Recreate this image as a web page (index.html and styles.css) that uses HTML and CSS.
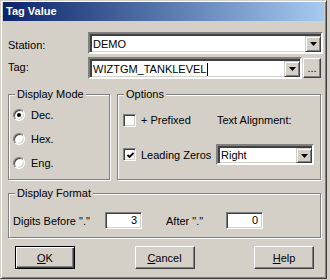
FILE: index.html
```html
<!DOCTYPE html>
<html>
<head>
<meta charset="utf-8">
<link rel="stylesheet" href="styles.css">
</head>
<body>
<div class="window">
  <div class="titlebar">Tag Value</div>
  <div class="body">
    <div class="row">
      <span class="lbl lbl-station">Station:</span>
      <div class="combo combo-station">
        <span class="val">DEMO</span>
        <span class="ddbtn"><svg width="7" height="4" viewBox="0 0 7 4"><polygon points="0,0 7,0 3.5,4" fill="#000"/></svg></span>
      </div>
    </div>
    <div class="row">
      <span class="lbl lbl-tag">Tag:</span>
      <div class="combo combo-tag">
        <span class="val">WIZTGM_TANKLEVEL<span class="caret"></span></span>
        <span class="ddbtn"><svg width="7" height="4" viewBox="0 0 7 4"><polygon points="0,0 7,0 3.5,4" fill="#000"/></svg></span>
      </div>
      <span class="btn btn-dots">...</span>
    </div>

    <div class="groups">
      <div class="group group-mode">
        <div class="legend">Display Mode</div>
        <div class="radios">
          <div class="ropt"><span class="radio on"></span><span>Dec.</span></div>
          <div class="ropt"><span class="radio"></span><span>Hex.</span></div>
          <div class="ropt"><span class="radio"></span><span>Eng.</span></div>
        </div>
      </div>
      <div class="group group-options">
        <div class="legend">Options</div>
        <div class="optgrid">
          <div class="copt"><span class="check"></span><span>+ Prefixed</span></div>
          <div class="talign">Text Alignment:</div>
          <div class="copt"><span class="check"><svg width="9" height="9" viewBox="0 0 9 9"><path d="M1.5 4 L3.5 6 L7.5 2" fill="none" stroke="#000" stroke-width="1.8"/></svg></span><span>Leading Zeros</span></div>
          <div class="combo combo-align">
            <span class="val">Right</span>
            <span class="ddbtn"><svg width="7" height="4" viewBox="0 0 7 4"><polygon points="0,0 7,0 3.5,4" fill="#000"/></svg></span>
          </div>
        </div>
      </div>
    </div>

    <div class="group group-format">
      <div class="legend">Display Format</div>
      <div class="fmtrow">
        <span class="flbl1">Digits Before "."</span>
        <span class="num">3</span>
        <span class="flbl2">After "."</span>
        <span class="num">0</span>
      </div>
    </div>

    <div class="buttons">
      <span class="btn btn-main default"><u>O</u>K</span>
      <span class="btn btn-main"><u>C</u>ancel</span>
      <span class="btn btn-main"><u>H</u>elp</span>
    </div>
  </div>
</div>
</body>
</html>
```

FILE: styles.css
```css
* { box-sizing: border-box; }
html, body { margin: 0; padding: 0; }
body {
  background: #d4d0c8;
  font: 11px "Liberation Sans", Arial, sans-serif;
  color: #000;
  width: 330px;
  height: 280px;
  overflow: hidden;
}
.window {
  width: 327px;
  height: 279px;
  border: 1px solid;
  border-color: #d4d0c8 #404040 #404040 #d4d0c8;
  box-shadow: inset 1px 1px #fff, inset -1px -1px #808080;
  padding: 1px 2px 2px 2px;
}
.titlebar {
  height: 19px;
  line-height: 19px;
  padding-left: 3px;
  background: linear-gradient(to right, #0a246a, #a6caf0);
  color: #fff;
  font-weight: bold;
}
.body {
  padding: 11px 0 0 5px;
}
.row {
  display: flex;
  align-items: center;
  height: 22px;
}
.row + .row { margin-top: 3px; }
.lbl { width: 80px; line-height: 13px; }
.lbl-station { padding-top: 4px; }
.lbl-tag { padding-bottom: 1px; }

.combo {
  display: flex;
  align-items: stretch;
  background: #fff;
  border: 2px solid;
  border-color: #808080 #fff #fff #808080;
  box-shadow: inset 2px 2px #404040, inset -1px -1px #d4d0c8;
  padding: 2px 0 0 2px;
}
.combo .val {
  flex: 1;
  display: flex;
  align-items: center;
  padding-left: 1px;
  font-size: 11px;
  line-height: 13px;
}
.combo-station { width: 235px; height: 22px; }
.combo-tag { width: 214px; height: 22px; }
.caret {
  display: inline-block;
  width: 1px;
  height: 13px;
  background: #000;
  margin-left: 1px;
}
.ddbtn {
  width: 16px;
  display: flex;
  align-items: center;
  justify-content: center;
  background: #d4d0c8;
  border: 1px solid;
  border-color: #d4d0c8 #404040 #404040 #d4d0c8;
  box-shadow: inset 1px 1px #fff, inset -1px -1px #808080;
}
.btn {
  display: flex;
  align-items: center;
  justify-content: center;
  background: #d4d0c8;
  border: 1px solid;
  border-color: #fff #404040 #404040 #fff;
  box-shadow: inset -1px -1px #808080;
}
.btn-dots {
  width: 18px;
  height: 20px;
  margin-left: 1px;
  padding-bottom: 3px;
  align-items: flex-end;
}

.groups {
  display: flex;
  gap: 7px;
  margin-top: 15px;
}
.group {
  border: 1px solid #808080;
  box-shadow: inset 1px 1px #fff, 1px 1px #fff;
}
.legend {
  width: fit-content;
  margin: -7px 0 0 6px;
  padding: 0 2px;
  line-height: 13px;
  background: #d4d0c8;
}
.group-mode { width: 102px; height: 86px; }
.group-options { width: 204px; height: 86px; }

.radios { padding: 2px 0 0 4px; }
.ropt {
  display: flex;
  align-items: center;
  gap: 6px;
  height: 24px;
}
.radio {
  position: relative;
  width: 12px;
  height: 12px;
  border-radius: 50%;
  background: #fff;
  border: 1px solid;
  border-color: #808080 #fff #fff #808080;
  box-shadow: inset 1px 1px #404040, inset -1px -1px #d4d0c8;
}
.radio.on::after {
  content: "";
  position: absolute;
  left: 3px;
  top: 3px;
  width: 4px;
  height: 4px;
  border-radius: 50%;
  background: #000;
}

.optgrid {
  display: grid;
  grid-template-columns: 93px 97px;
  grid-template-rows: 20px 21px;
  row-gap: 14px;
  padding: 9px 0 0 5px;
  align-items: center;
}
.copt {
  display: flex;
  align-items: center;
  gap: 5px;
}
.check {
  width: 13px;
  height: 13px;
  display: flex;
  align-items: center;
  justify-content: center;
  background: #fff;
  border: 1px solid;
  border-color: #808080 #fff #fff #808080;
  box-shadow: inset 1px 1px #404040, inset -1px -1px #d4d0c8;
  padding: 1px 0 0 1px;
}
.talign { padding-left: 1px; }
.combo-align {
  width: 98px;
  height: 21px;
}
.combo-align .ddbtn { width: 16px; }

.group-format {
  width: 313px;
  height: 45px;
  margin-top: 13px;
}
.fmtrow {
  display: flex;
  align-items: center;
  height: 17px;
  margin-top: 12px;
  padding-left: 4px;
}
.flbl1 { width: 92px; }
.flbl2 { width: 60px; margin-left: 24px; }
.num {
  width: 37px;
  height: 17px;
  background: #fff;
  border: 1px solid;
  border-color: #808080 #fff #fff #808080;
  box-shadow: inset 1px 1px #404040, inset -1px -1px #d4d0c8;
  text-align: right;
  padding-right: 4px;
  line-height: 15px;
}

.buttons {
  display: flex;
  justify-content: space-between;
  width: 299px;
  margin: 8px 0 0 7px;
}
.btn-main {
  width: 60px;
  height: 23px;
}
.btn-main.default {
  border: 1px solid #000;
  box-shadow: inset 1px 1px #fff, inset -1px -1px #404040, inset -2px -2px #808080;
}
```
